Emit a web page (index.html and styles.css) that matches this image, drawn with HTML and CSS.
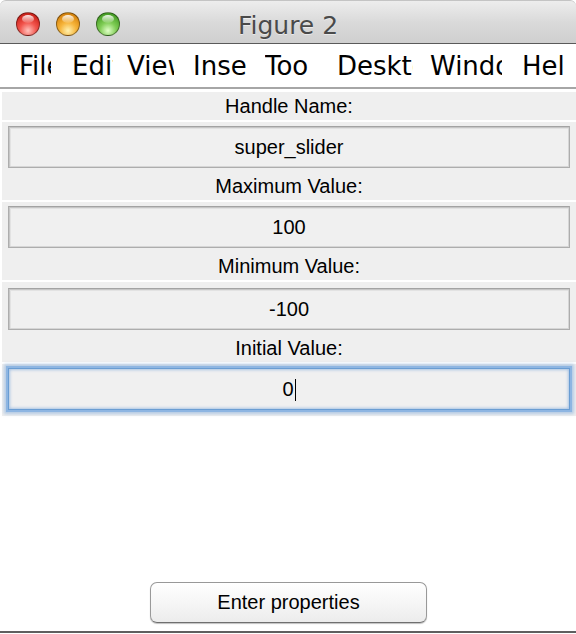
FILE: index.html
```html
<!DOCTYPE html>
<html lang="en">
<head>
<meta charset="utf-8">
<title>Figure 2</title>
<link rel="stylesheet" href="styles.css">
</head>
<body>
<div class="window">
  <header class="titlebar">
    <div class="lights">
      <span class="light light-close"></span>
      <span class="light light-min"></span>
      <span class="light light-zoom"></span>
    </div>
    <div class="title">Figure 2</div>
    <div></div>
  </header>
  <nav class="menubar">
    <span class="menu m1">File</span>
    <span class="menu m2">Edit</span>
    <span class="menu m3">View</span>
    <span class="menu m4">Insert</span>
    <span class="menu m5">Tools</span>
    <span class="menu m6">Desktop</span>
    <span class="menu m7">Window</span>
    <span class="menu m8">Help</span>
  </nav>
  <main class="form">
    <div class="row row-first">
      <div class="label label-first">Handle Name:</div>
    </div>
    <div class="row">
      <div class="field">super_slider</div>
      <div class="label">Maximum Value:</div>
    </div>
    <div class="row">
      <div class="field">100</div>
      <div class="label">Minimum Value:</div>
    </div>
    <div class="row row-d">
      <div class="field">-100</div>
      <div class="label">Initial Value:</div>
    </div>
    <div class="row row-last">
      <div class="field field-focus">0<span class="caret"></span></div>
    </div>
  </main>
  <div class="spacer"></div>
  <footer class="actions">
    <button class="btn" type="button">Enter properties</button>
  </footer>
</div>
</body>
</html>
```

FILE: styles.css
```css
* { box-sizing: border-box; }
html, body { margin: 0; padding: 0; background: #ffffff; }
body { width: 576px; height: 634px; overflow: hidden; }

.window {
  width: 576px;
  height: 633px;
  display: flex;
  flex-direction: column;
  border-bottom: 2px solid #5f5f5f;
  background: #ffffff;
}

/* Title bar */
.titlebar {
  height: 44px;
  flex: none;
  display: grid;
  grid-template-columns: 1fr auto 1fr;
  align-items: start;
  background: linear-gradient(#ededed, #dadada 50%, #cfcfcf);
  border-top: 1px solid #c4c4c4;
  border-bottom: 1px solid #5a5a5a;
  border-radius: 6px 6px 0 0;
}
.lights {
  display: flex;
  gap: 16px;
  padding-left: 16px;
  padding-top: 11px;
}
.light {
  position: relative;
  width: 24px;
  height: 24px;
  border-radius: 50%;
  border: 1px solid rgba(0, 0, 0, 0.4);
}
.light::after {
  content: "";
  position: absolute;
  left: 5px;
  top: 2px;
  width: 12px;
  height: 8px;
  border-radius: 50%;
  background: linear-gradient(rgba(255,255,255,0.9), rgba(255,255,255,0.1));
}
.light-close { background: radial-gradient(circle at 50% 80%, #ffc2bc 0%, #f2554d 40%, #d1271f 75%, #a51a14 100%); }
.light-min { background: radial-gradient(circle at 50% 80%, #fff1b0 0%, #f6b43a 40%, #dc8a12 75%, #a86208 100%); }
.light-zoom { background: radial-gradient(circle at 50% 80%, #e0ffc8 0%, #7fcc55 40%, #4ea52c 75%, #2f7a18 100%); }

.title {
  font-family: "DejaVu Sans", sans-serif;
  font-size: 25px;
  line-height: 29px;
  padding-top: 10px;
  color: #4a4a4a;
  text-shadow: 0 1px 0 rgba(255, 255, 255, 0.5);
  white-space: nowrap;
}

/* Menu bar */
.menubar {
  height: 45px;
  flex: none;
  display: flex;
  padding-left: 19px;
  padding-top: 2px;
  border-bottom: 2px solid #a6a6a6;
  background: #ffffff;
}
.menu {
  font-family: "DejaVu Sans", sans-serif;
  font-size: 26px;
  line-height: 41px;
  color: #000000;
  white-space: nowrap;
  overflow: hidden;
  flex: none;
}
.m1 { width: 32px; margin-right: 21px; }
.m2 { width: 41px; margin-right: 14px; }
.m3 { width: 47px; margin-right: 19px; }
.m4 { width: 55px; margin-right: 17px; }
.m5 { width: 45px; margin-right: 27px; }
.m6 { width: 76px; margin-right: 17px; }
.m7 { width: 72px; margin-right: 20px; }
.m8 { width: 44px; }

/* Form */
.form {
  flex: none;
  display: flex;
  flex-direction: column;
  gap: 2px;
  padding: 3px 0 0 2px;
  font-family: "Liberation Sans", Arial, sans-serif;
  font-size: 20px;
  color: #000000;
}
.row {
  background: #efefef;
  padding: 4px 6px 0;
}
.row-first { padding: 0 6px; }
.row-d { padding-top: 6px; }
.row-last { padding: 4px 6px 6px; }

.label {
  height: 32px;
  padding-top: 4px;
  line-height: 28px;
  text-align: center;
  white-space: nowrap;
}
.label-first { height: 28px; padding-top: 0; }

.field {
  height: 42px;
  line-height: 40px;
  text-align: center;
  background: #f0f0f0;
  border: 1px solid #adadad;
  border-top-color: #a3a3a3;
  box-shadow: inset 1px 1px 0 #c6c6c6, inset -1px -1px 0 #d6d6d6, inset 2px 2px 0 #e2e2e2;
}
.field-focus {
  border: 1px solid #6a9dd3;
  box-shadow: 0 0 0 2px #8db5e2, 0 0 3px 4px rgba(120, 165, 220, 0.5), inset 0 0 3px 1px rgba(120, 165, 220, 0.6);
}
.caret {
  display: inline-block;
  width: 1px;
  height: 22px;
  margin-left: 1px;
  background: #000000;
  vertical-align: -5px;
}

.spacer { flex: 1; }

/* Footer */
.actions {
  flex: none;
  display: flex;
  justify-content: center;
  padding-bottom: 8px;
}
.btn {
  width: 277px;
  height: 41px;
  margin-left: 1px;
  font-family: "Liberation Sans", Arial, sans-serif;
  font-size: 20px;
  color: #000000;
  background: linear-gradient(#ffffff, #f6f6f6 50%, #ececec);
  border: 1px solid #999999;
  border-bottom-color: #6f6f6f;
  border-radius: 7px;
  box-shadow: 0 1px 1px rgba(0, 0, 0, 0.25);
  padding: 0;
}
```
